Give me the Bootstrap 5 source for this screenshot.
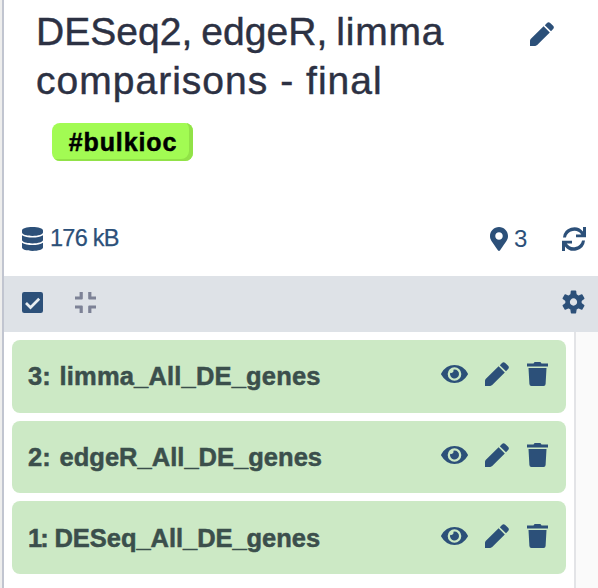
<!DOCTYPE html>
<html lang="en">
<head>
<meta charset="utf-8">
<meta name="viewport" content="width=device-width, initial-scale=1">
<title>History</title>
<link href="https://cdn.jsdelivr.net/npm/bootstrap@5.3.0/dist/css/bootstrap.min.css" rel="stylesheet">
<style>
  body { font-family: "Liberation Sans", Arial, sans-serif; background: #eeeeed; color: #2c3143; width: 598px; height: 588px; overflow: hidden; padding-left: 2px; }
  .history { height: 588px; border-left: 2px solid #c1c5d0; background: #fff; }
  .blue { color: #2c5079; }
  svg { display: block; fill: currentColor; flex: none; }
  .head { height: 208px; padding: 7px 44px 0 32px; }
  .title { font-size: 39px; line-height: 49px; font-weight: 400; white-space: nowrap; margin: 0; -webkit-text-stroke: .45px currentColor; }
  .title span { display: block; }
  .t1 { letter-spacing: .05px; word-spacing: -2px; }
  .t1 b { font-weight: 400; letter-spacing: .8px; }
  .t2 { letter-spacing: 1.02px; }
  .pen-top { margin-top: 15px; }
  .tag { margin: 18px 0 0 16px; width: 141px; height: 38px; padding: 3px 0 2px 1px; border-radius: 8px; background: #a2fb53; box-shadow: inset -4px -2px 0 #91e247; color: #000; font-size: 25px; font-weight: 700; letter-spacing: .9px; -webkit-text-stroke: .5px currentColor; }
  .stats { height: 68px; padding: 0 12px 6px 18px; font-size: 24px; }
  .size-text { margin-left: 7px; font-size: 23.5px; letter-spacing: -.75px; -webkit-text-stroke: .25px currentColor; }
  .count-text { margin-left: 6px; width: 14px; }
  .refresh { margin-left: 34px; }
  .tools { height: 56px; padding: 0 13px 4px 18px; background: #dee2e7; }
  .grey { color: #7d8296; }
  .shrink { margin-left: 32px; }
  .list { width: 572px; height: 256px; padding: 8px 8px 0; border-right: 2px solid #e3e4e7; box-sizing: border-box; }
  .gutter { background: #fafafa; }
  .item { height: 72.67px; margin-bottom: 8px; padding: 0 18px 0 16px; border-radius: 8px; background: #cce9c5; }
  .name { color: #3b4f4c; font-size: 25.5px; font-weight: 700; white-space: nowrap; -webkit-text-stroke: .5px currentColor; }
  .n3 { letter-spacing: .18px; }
  .n2 { letter-spacing: .02px; }
  .n1 { letter-spacing: -.05px; }
  .hid { display: inline-block; width: 31.500px; }
  .n1 .hid { width: 26.500px; letter-spacing: -2px; }
  .icons { margin-top: -4px; }
  .pen-item { margin: 0 18px 0 17px; }
</style>
<script src="https://cdn.jsdelivr.net/npm/bootstrap@5.3.0/dist/js/bootstrap.bundle.min.js"></script>
</head>
<body>
<svg width="0" height="0" class="position-absolute">
  <defs>
    <symbol id="pen" viewBox="0 0 24 24"><path d="M0 18.800Q0 17.600.9 16.700L13.600 4.200l6.200 6.200L7.200 23.100q-.8.800-2 .8H0zM14.800 3.200l2.200-2.300q1.600-1.500 3.200 0l2.900 2.900q1.500 1.600 0 3.200L21 9.300z"/></symbol>
    <symbol id="eye" viewBox="0 0 27 18"><path fill-rule="evenodd" d="M.3 8.200Q5 0 13.500 0t13.200 8.200q.5.800 0 1.600Q22 18 13.500 18T.3 9.800Q-.2 9 .3 8.200zM13.500 2.200a6.800 6.800 0 1 0 0 13.600 6.800 6.800 0 0 0 0-13.600z"/><path d="M13.500 4.500a4.500 4.500 0 1 1-4.300 3.200 2.300 2.300 0 0 0 3.200-2.900q.5-.3 1.100-.3z"/></symbol>
    <symbol id="trash" viewBox="0 0 21 24"><path d="M0 1.500h6.500L7.300.3Q7.600 0 8 0h5q.4 0 .7.300l.8 1.200H21v3H0zM1.500 6h18l-.9 16q-.1 2-2 2H4.400q-1.900 0-2-2z"/></symbol>
  </defs>
</svg>
<main class="history">
  <div class="head">
    <div class="d-flex justify-content-between align-items-start">
      <h1 class="title"><span class="t1">DESeq2, edgeR, <b>limma</b></span><span class="t2">comparisons - final</span></h1>
      <svg class="blue pen-top" width="24" height="24"><use href="#pen"/></svg>
    </div>
    <div class="tag d-flex align-items-center justify-content-center">#bulkioc</div>
  </div>
  <div class="stats blue d-flex align-items-center">
    <svg width="21" height="24" viewBox="0 0 448 512" preserveAspectRatio="none"><path d="M448 73.143v45.714C448 159.143 347.667 192 224 192S0 159.143 0 118.857V73.143C0 32.857 100.333 0 224 0s224 32.857 224 73.143zM448 176v102.857C448 319.143 347.667 352 224 352S0 319.143 0 278.857V176c48.125 33.143 136.208 48.572 224 48.572S399.874 209.143 448 176zm0 160v102.857C448 479.143 347.667 512 224 512S0 479.143 0 438.857V336c48.125 33.143 136.208 48.572 224 48.572S399.874 369.143 448 336z"/></svg>
    <span class="size-text">176 kB</span>
    <svg class="ms-auto" width="18" height="24" viewBox="0 0 384 512"><path d="M172.268 501.670C26.970 291.031 0 269.413 0 192 0 85.961 85.961 0 192 0s192 85.961 192 192c0 77.413-26.970 99.031-172.268 309.670-9.535 13.774-29.930 13.773-39.464 0zM192 272c44.183 0 80-35.817 80-80s-35.817-80-80-80-80 35.817-80 80 35.817 80 80 80z"/></svg>
    <span class="count-text">3</span>
    <svg class="refresh" width="24" height="24" viewBox="0 0 24 24"><path d="M1 10.400A11.200 11.200 0 0 1 21 4.600V0h3v10.200H14V7.400h5.300A8.600 8.600 0 0 0 3.900 10.400zM23 13.600A11.200 11.200 0 0 1 3 19.400V24H0V13.800h10v2.800H4.700a8.600 8.600 0 0 0 15.400-3z"/></svg>
  </div>
  <div class="tools d-flex align-items-center">
    <svg class="blue" width="21" height="21" viewBox="0 0 21 21"><rect width="21" height="21" rx="2.200"/><path d="m4 11 4.500 4.500 8.700-8.700" fill="none" stroke="#e8edf0" stroke-width="2.700"/></svg>
    <svg class="grey shrink" width="21" height="21" viewBox="0 0 21 21"><path d="M4.600 0h3.200v6.600q0 1-1 1H0V4.500h4.600zM13.200 0h3.200v4.500H21v3.100h-6.800q-1 0-1-1zM0 13.400h6.800q1 0 1 1V21H4.600v-4.500H0zM14.200 13.400H21v3.100h-4.600V21h-3.200v-6.600q0-1 1-1z"/></svg>
    <svg class="blue ms-auto" width="23" height="24" viewBox="-12 -12 24 24"><defs><path id="tooth" d="M-3.300-7.500-2.800-11.300q.1-.6.700-.6h4.200q.6 0 .7.600l.5 3.800z"/></defs><circle r="6.200" fill="none" stroke="currentColor" stroke-width="4.800"/><use href="#tooth"/><use href="#tooth" transform="rotate(60)"/><use href="#tooth" transform="rotate(120)"/><use href="#tooth" transform="rotate(180)"/><use href="#tooth" transform="rotate(240)"/><use href="#tooth" transform="rotate(300)"/></svg>
  </div>
  <div class="gutter">
    <div class="list bg-white">
      <div class="item d-flex align-items-center justify-content-between">
        <span class="name n3"><span class="hid">3:</span>limma_All_DE_genes</span>
        <div class="icons blue d-flex align-items-center"><svg width="27" height="18"><use href="#eye"/></svg><svg class="pen-item" width="24" height="24"><use href="#pen"/></svg><svg width="21" height="24"><use href="#trash"/></svg></div>
      </div>
      <div class="item d-flex align-items-center justify-content-between">
        <span class="name n2"><span class="hid">2:</span>edgeR_All_DE_genes</span>
        <div class="icons blue d-flex align-items-center"><svg width="27" height="18"><use href="#eye"/></svg><svg class="pen-item" width="24" height="24"><use href="#pen"/></svg><svg width="21" height="24"><use href="#trash"/></svg></div>
      </div>
      <div class="item d-flex align-items-center justify-content-between">
        <span class="name n1"><span class="hid">1:</span>DESeq_All_DE_genes</span>
        <div class="icons blue d-flex align-items-center"><svg width="27" height="18"><use href="#eye"/></svg><svg class="pen-item" width="24" height="24"><use href="#pen"/></svg><svg width="21" height="24"><use href="#trash"/></svg></div>
      </div>
    </div>
  </div>
</main>
</body>
</html>
